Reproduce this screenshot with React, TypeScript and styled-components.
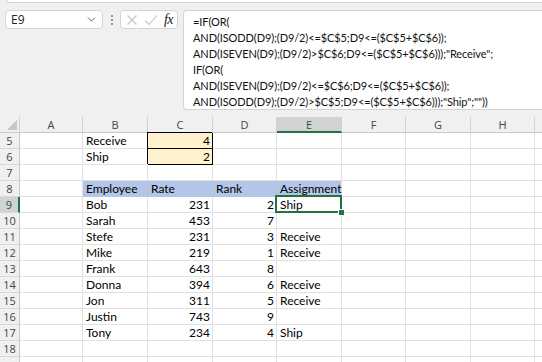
import React from "react";
import styled, { createGlobalStyle } from "styled-components";
import { ChevronDown } from "lucide-react";

const Global = createGlobalStyle`
  html, body { margin: 0; padding: 0; background: #f0f0f0; overflow: hidden; }
  body { width: 542px; height: 362px; }
`;

const CELL_FONT = `Lato, "Liberation Sans", sans-serif`;
const UI_FONT = `"Open Sans", "Noto Sans", sans-serif`;

const Page = styled.div`
  display: flex;
  flex-direction: column;
  width: 542px;
  height: 362px;
  overflow: hidden;
  background: #f0f0f0;
`;

const RibbonEdge = styled.div`
  flex-shrink: 0;
  height: 2px;
  margin-left: 6px;
  background: #ffffff;
  border-left: 1px solid #d6d6d6;
  border-bottom: 1px solid #d6d6d6;
  border-bottom-left-radius: 4px;
`;

const FormulaRow = styled.div`
  flex-shrink: 0;
  box-sizing: border-box;
  display: flex;
  align-items: flex-start;
  padding: 7px 0 0 5px;
  height: 107px;
  margin-bottom: 7px;
  & > * {
    flex-shrink: 0;
  }
`;

const NameBox = styled.div`
  box-sizing: border-box;
  width: 98px;
  height: 19px;
  background: #fff;
  border: 1px solid #d4d4d4;
  border-radius: 4px;
  display: flex;
  align-items: center;
  justify-content: space-between;
  padding: 0 4px 0 5px;
  font-family: ${UI_FONT};
  font-size: 12px;
  color: #222;
`;

const Dots = styled.div`
  width: 17px;
  height: 19px;
  display: flex;
  flex-direction: column;
  align-items: center;
  justify-content: center;
  gap: 2px;
  & > span {
    width: 2px;
    height: 2px;
    border-radius: 1px;
    background: #7a7a7a;
  }
`;

const FuncBox = styled.div`
  box-sizing: border-box;
  width: 58px;
  height: 19px;
  background: #fff;
  border: 1px solid #d4d4d4;
  border-radius: 4px;
  display: flex;
  align-items: center;
  justify-content: space-between;
  padding: 0 4px 0 5px;
  margin-right: 5px;
`;

const Fx = styled.span`
  font-family: "Liberation Serif", serif;
  font-style: italic;
  font-size: 14px;
  color: #222;
  letter-spacing: -0.5px;
`;

const FormulaBox = styled.div`
  box-sizing: border-box;
  width: 380px;
  height: 100px;
  background: #fff;
  border: 1px solid #d4d4d4;
  border-right: none;
  border-radius: 4px 0 0 4px;
  padding: 3px 0 0 9px;
  font-family: ${CELL_FONT};
  font-size: 11px;
  letter-spacing: -0.1px;
  line-height: 16px;
  color: #111;
  white-space: pre;
`;

const Sheet = styled.div`
  display: grid;
  grid-template-columns: 20px 63px 65px 65px 64px 65px 64px 65px 64px 40px;
  grid-auto-rows: 16px;
  background: #fff;
  flex: 1;
`;

const ColHead = styled.div<{ $sel?: boolean }>`
  box-sizing: border-box;
  background: ${(p) => (p.$sel ? "#d2d2d2" : "#f0f0f0")};
  border-right: 1px solid #d0d0d0;
  border-bottom: ${(p) => (p.$sel ? "2px solid #217346" : "1px solid #c8c8c8")};
  display: flex;
  align-items: center;
  justify-content: center;
  font-family: ${UI_FONT};
  font-size: 11px;
  color: ${(p) => (p.$sel ? "#1d5c37" : "#444")};
`;

const Corner = styled.div`
  box-sizing: border-box;
  background: #f0f0f0;
  border-right: 1px solid #d0d0d0;
  border-bottom: 1px solid #c8c8c8;
  position: relative;
  &::after {
    content: "";
    position: absolute;
    right: 2px;
    bottom: 2px;
    width: 0;
    height: 0;
    border-left: 10px solid transparent;
    border-bottom: 10px solid #c6c6c6;
  }
`;

const RowHead = styled.div<{ $sel?: boolean }>`
  box-sizing: border-box;
  background: ${(p) => (p.$sel ? "#d2d2d2" : "#f0f0f0")};
  border-right: ${(p) => (p.$sel ? "2px solid #217346" : "1px solid #c8c8c8")};
  border-bottom: 1px solid #d8d8d8;
  display: flex;
  align-items: center;
  justify-content: center;
  font-family: ${UI_FONT};
  font-size: 11px;
  color: ${(p) => (p.$sel ? "#1d5c37" : "#444")};
`;

type Kind = "plain" | "input" | "band" | "bandEnd";

const Cell = styled.div<{ $kind?: Kind; $right?: boolean; $active?: boolean }>`
  box-sizing: border-box;
  position: relative;
  border-right: 1px solid
    ${(p) => (p.$kind === "band" ? "#b4c6e7" : p.$kind === "input" ? "#000" : "#e1e1e1")};
  border-bottom: 1px solid
    ${(p) => (p.$kind === "band" || p.$kind === "bandEnd" ? "#b4c6e7" : p.$kind === "input" ? "#000" : "#e1e1e1")};
  background: ${(p) =>
    p.$kind === "input" ? "#fff2cc" : p.$kind === "band" || p.$kind === "bandEnd" ? "#b4c6e7" : "#fff"};
  box-shadow: ${(p) => (p.$kind === "input" ? "-1px -1px 0 0 #000" : "none")};
  padding: 0 2px 0 3px;
  font-family: ${CELL_FONT};
  font-size: 12px;
  line-height: 16px;
  color: #000;
  text-align: ${(p) => (p.$right ? "right" : "left")};
  white-space: nowrap;
  z-index: ${(p) => (p.$active ? 2 : p.$kind === "input" ? 1 : 0)};
  ${(p) =>
    p.$active
      ? `
    &::after {
      content: "";
      position: absolute;
      left: -2px;
      top: -2px;
      right: -1px;
      bottom: -1px;
      border: 2px solid #217346;
      pointer-events: none;
    }
    &::before {
      content: "";
      position: absolute;
      right: -4px;
      bottom: -4px;
      width: 5px;
      height: 5px;
      background: #217346;
      border: 1px solid #fff;
      z-index: 3;
    }
  `
      : ""}
`;

type CellData = { v?: string; right?: boolean; kind?: Kind };

const COLS = ["A", "B", "C", "D", "E", "F", "G", "H", ""];

const data: [string, number, number, string][] = [
  ["Bob", 231, 2, "Ship"],
  ["Sarah", 453, 7, ""],
  ["Stefe", 231, 3, "Receive"],
  ["Mike", 219, 1, "Receive"],
  ["Frank", 643, 8, ""],
  ["Donna", 394, 6, "Receive"],
  ["Jon", 311, 5, "Receive"],
  ["Justin", 743, 9, ""],
  ["Tony", 234, 4, "Ship"],
];

function rowCells(r: number): CellData[] {
  const cells: CellData[] = Array.from({ length: 9 }, () => ({}));
  if (r === 5) {
    cells[1] = { v: "Receive" };
    cells[2] = { v: "4", right: true, kind: "input" };
  } else if (r === 6) {
    cells[1] = { v: "Ship" };
    cells[2] = { v: "2", right: true, kind: "input" };
  } else if (r === 8) {
    cells[1] = { v: "Employee", kind: "band" };
    cells[2] = { v: "Rate", kind: "band" };
    cells[3] = { v: "Rank", kind: "band" };
    cells[4] = { v: "Assignment", kind: "bandEnd" };
  } else if (r >= 9 && r <= 17) {
    const d = data[r - 9];
    cells[1] = { v: d[0] };
    cells[2] = { v: String(d[1]), right: true };
    cells[3] = { v: String(d[2]), right: true };
    cells[4] = { v: d[3] };
  }
  return cells;
}

const formula = `=IF(OR(
AND(ISODD(D9);(D9/2)<=$C$5;D9<=($C$5+$C$6));
AND(ISEVEN(D9);(D9/2)>$C$6;D9<=($C$5+$C$6)));"Receive";
IF(OR(
AND(ISEVEN(D9);(D9/2)<=$C$6;D9<=($C$5+$C$6));
AND(ISODD(D9);(D9/2)>$C$5;D9<=($C$5+$C$6)));"Ship";""))`;

export default function App() {
  const rows = Array.from({ length: 15 }, (_, i) => i + 5);
  return (
    <>
      <Global />
      <Page>
        <RibbonEdge />
        <FormulaRow>
          <NameBox>
            <span>E9</span>
            <ChevronDown size={13} strokeWidth={1.6} color="#444" />
          </NameBox>
          <Dots>
            <span />
            <span />
            <span />
          </Dots>
          <FuncBox>
            <svg width="12" height="12" viewBox="0 0 12 12">
              <path d="M1.5 1.5 L10.5 10.5 M10.5 1.5 L1.5 10.5" stroke="#c4c4c4" strokeWidth="1.1" fill="none" />
            </svg>
            <svg width="14" height="12" viewBox="0 0 14 12">
              <path d="M1 6.5 L5 10.5 L13 1.5" stroke="#c4c4c4" strokeWidth="1.1" fill="none" />
            </svg>
            <Fx>fx</Fx>
          </FuncBox>
          <FormulaBox>{formula}</FormulaBox>
        </FormulaRow>
        <Sheet>
          <Corner />
          {COLS.map((c, i) => (
            <ColHead key={i} $sel={c === "E"}>
              {c}
            </ColHead>
          ))}
          {rows.map((r) => (
            <React.Fragment key={r}>
              <RowHead $sel={r === 9}>{r < 19 ? r : ""}</RowHead>
              {rowCells(r).map((cell, ci) => (
                <Cell
                  key={ci}
                  $kind={cell.kind ?? "plain"}
                  $right={cell.right}
                  $active={r === 9 && ci === 4}
                >
                  {cell.v}
                </Cell>
              ))}
            </React.Fragment>
          ))}
        </Sheet>
      </Page>
    </>
  );
}
